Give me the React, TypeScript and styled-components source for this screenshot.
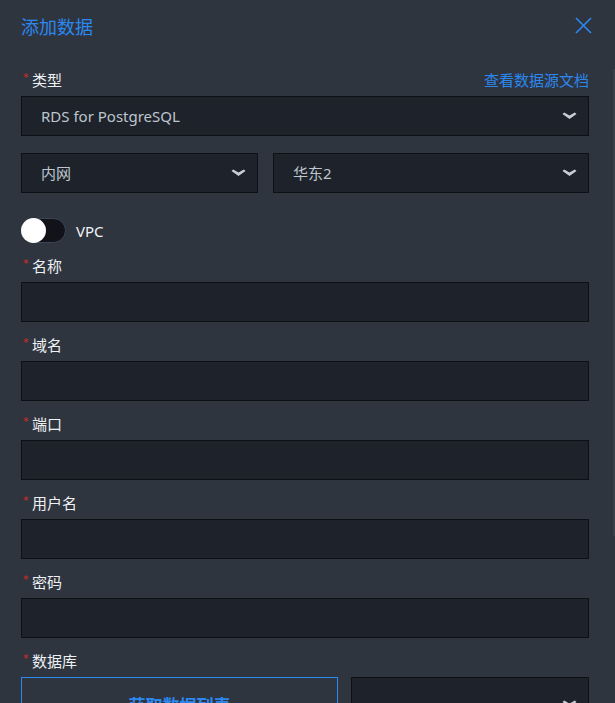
import React from "react";
import styled, { createGlobalStyle } from "styled-components";

const GlobalStyle = createGlobalStyle`
  html, body { margin: 0; padding: 0; background: #2f353f; }
  body { font-family: "Noto Sans", "Noto Sans CJK SC", sans-serif; }
  * { box-sizing: border-box; }
`;

const Dialog = styled.div`
  position: relative;
  width: 615px;
  height: 703px;
  overflow: hidden;
  background: #2f353f;
  padding: 0 26px 0 21px;
`;

const Header = styled.div`
  display: flex;
  align-items: center;
  justify-content: space-between;
  height: 51px;
  margin-right: -4px;
`;

const Title = styled.div`
  font-family: "Noto Sans CJK SC", sans-serif;
  font-size: 18px;
  color: #2b88f0;
  line-height: 24px;
`;

const CloseBtn = styled.div`
  width: 18px;
  height: 18px;
  display: flex;
  align-items: center;
  justify-content: center;
  margin-right: 1px;
`;

const Form = styled.div`
  margin-top: 18px;
  display: flex;
  flex-direction: column;
`;

const LabelRow = styled.div`
  display: flex;
  align-items: center;
  justify-content: space-between;
  height: 22px;
  margin-bottom: 5px;
`;

const Label = styled.div`
  position: relative;
  font-family: "Noto Sans CJK SC", sans-serif;
  font-size: 15px;
  color: #eef0f3;
  padding-left: 11px;
  line-height: 20px;
`;

const Star = styled.span`
  position: absolute;
  left: 2px;
  top: -2px;
  font-size: 11px;
  font-style: italic;
  color: #d42a2a;
  font-family: "DejaVu Sans", sans-serif;
`;

const Link = styled.a`
  font-family: "Noto Sans CJK SC", sans-serif;
  font-size: 15px;
  color: #2b88f0;
  text-decoration: none;
  line-height: 20px;
`;

const Box = styled.div<{ $h?: number; $mb?: number }>`
  height: ${(p) => p.$h ?? 40}px;
  background: #1d222b;
  border: 1px solid #0d1014;
  display: flex;
  align-items: center;
  justify-content: space-between;
  padding: 0 11px 0 19px;
  margin-bottom: ${(p) => p.$mb ?? 12}px;
  font-size: 15px;
  line-height: 20px;
  color: #bfc5cd;
  font-family: "Noto Sans", "Noto Sans CJK SC", sans-serif;
`;

const Row = styled.div<{ $cols: string; $gap: number; $mb?: number }>`
  display: grid;
  grid-template-columns: ${(p) => p.$cols};
  column-gap: ${(p) => p.$gap}px;
  margin-bottom: ${(p) => p.$mb ?? 0}px;
`;

const SwitchRow = styled.div`
  display: flex;
  align-items: center;
  gap: 10px;
  margin-bottom: 12px;
  height: 25px;
`;

const Track = styled.div`
  width: 45px;
  height: 25px;
  border-radius: 13px;
  background: #111318;
  border: 1px solid #3a455a;
  display: flex;
  align-items: center;
`;

const Knob = styled.div`
  width: 25px;
  height: 25px;
  border-radius: 50%;
  background: #ffffff;
  margin-left: -1px;
`;

const SwitchLabel = styled.div`
  font-family: "Noto Sans", sans-serif;
  font-size: 15px;
  color: #f2f3f5;
`;

const FetchBtn = styled.div`
  height: 54px;
  border: 1px solid #2b88f0;
  display: flex;
  align-items: center;
  justify-content: center;
  font-family: "Noto Sans CJK SC", sans-serif;
  font-size: 17px;
  font-weight: 700;
  color: #2b88f0;
`;

const ScrollThumb = styled.div`
  position: absolute;
  right: 0;
  top: 69px;
  width: 2px;
  height: 467px;
  background: #3a404a;
`;

const Chevron = () => (
  <svg width="15" height="8" viewBox="0 0 15 8">
    <path d="M0.5 2 L2.2 0.5 L7.5 3.6 L12.8 0.5 L14.5 2 L7.5 7 Z" fill="#c7ced8" />
  </svg>
);

const Field = ({ label }: { label: string }) => (
  <>
    <LabelRow>
      <Label>
        <Star>*</Star>
        {label}
      </Label>
    </LabelRow>
    <Box />
  </>
);

export default function App() {
  return (
    <>
      <GlobalStyle />
      <Dialog>
        <Header>
          <Title>添加数据</Title>
          <CloseBtn>
            <svg width="17" height="17" viewBox="0 0 17 17">
              <path d="M1 1 L16 16 M16 1 L1 16" stroke="#2b88f0" strokeWidth="1.6" fill="none" />
            </svg>
          </CloseBtn>
        </Header>
        <Form>
          <LabelRow>
            <Label>
              <Star>*</Star>类型
            </Label>
            <Link>查看数据源文档</Link>
          </LabelRow>
          <Box $mb={17}>
            <span>RDS for PostgreSQL</span>
            <Chevron />
          </Box>
          <Row $cols="3fr 4fr" $gap={15} $mb={25}>
            <Box $mb={0}>
              <span>内网</span>
              <Chevron />
            </Box>
            <Box $mb={0}>
              <span>华东2</span>
              <Chevron />
            </Box>
          </Row>
          <SwitchRow>
            <Track>
              <Knob />
            </Track>
            <SwitchLabel>VPC</SwitchLabel>
          </SwitchRow>
          <Field label="名称" />
          <Field label="域名" />
          <Field label="端口" />
          <Field label="用户名" />
          <Field label="密码" />
          <LabelRow>
            <Label>
              <Star>*</Star>数据库
            </Label>
          </LabelRow>
          <Row $cols="4fr 3fr" $gap={13}>
            <FetchBtn>获取数据列表</FetchBtn>
            <Box $h={54} $mb={0}>
              <span />
              <Chevron />
            </Box>
          </Row>
        </Form>
        <ScrollThumb />
      </Dialog>
    </>
  );
}
